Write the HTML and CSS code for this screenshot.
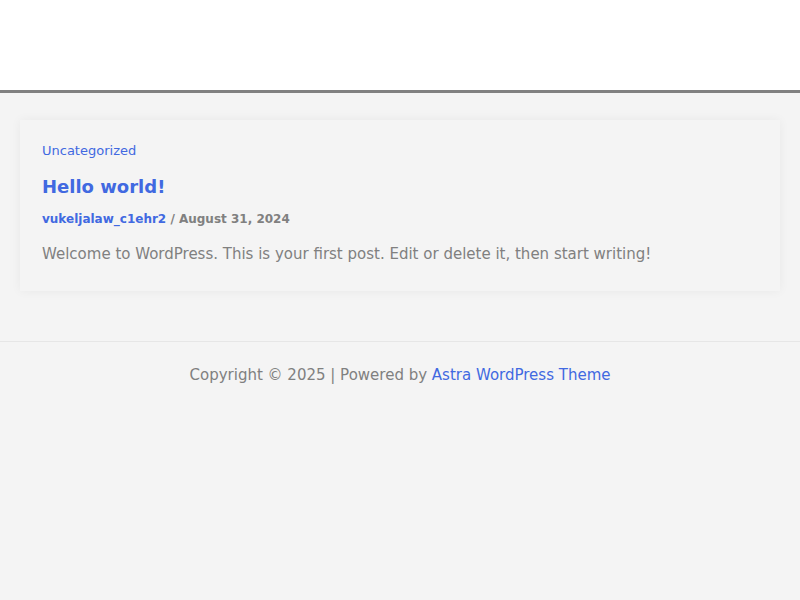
FILE: index.html
```html
<!DOCTYPE html>
<html lang="en">
<head>
    <meta charset="UTF-8">
    <meta name="viewport" content="width=device-width, initial-scale=1.0">
    <title>Blog</title>
    <link rel="stylesheet" href="styles.css">
</head>
<body>
    <header class="site-header"></header>

    <main class="site-content">
        <article class="post-card">
            <div class="post-cat"><a href="#">Uncategorized</a></div>
            <h2 class="post-title"><a href="#">Hello world!</a></h2>
            <div class="post-meta">
                <a href="#">vukeljalaw_c1ehr2</a> / <span>August 31, 2024</span>
            </div>
            <p class="post-excerpt">Welcome to WordPress. This is your first post. Edit or delete it, then start writing!</p>
        </article>
    </main>

    <footer class="site-footer">
        <p>Copyright © 2025 | Powered by <a href="#">Astra WordPress Theme</a></p>
    </footer>
</body>
</html>
```

FILE: styles.css
```css
html, body {
    margin: 0;
    padding: 0;
}

body {
    font-family: 'DejaVu Sans', sans-serif;
    background-color: #f4f4f4;
    color: #808080;
    min-height: 600px;
}

a {
    color: #4169e1;
    text-decoration: none;
}

.site-header {
    height: 90px;
    background-color: #fff;
    border-bottom: 3px solid #808080;
}

.site-content {
    padding: 27px 20px 50px;
}

.post-card {
    background-color: #f4f4f4;
    box-shadow: 0 0 10px rgba(0, 0, 0, 0.05);
    padding: 23px 22px 27px;
}

.post-cat {
    font-size: 13px;
    line-height: 16px;
}

.post-title {
    font-size: 18px;
    line-height: 22px;
    font-weight: bold;
    margin: 17px 0 0;
}

.post-meta {
    font-size: 12px;
    font-weight: bold;
    line-height: 16px;
    margin-top: 13px;
}

.post-excerpt {
    font-size: 15px;
    line-height: 20px;
    margin: 17px 0 0;
}

.site-footer {
    border-top: 1px solid #e6e6e6;
    text-align: center;
    font-size: 15px;
    padding: 23px 0 24px;
}

.site-footer p {
    margin: 0;
    line-height: 20px;
}
```
